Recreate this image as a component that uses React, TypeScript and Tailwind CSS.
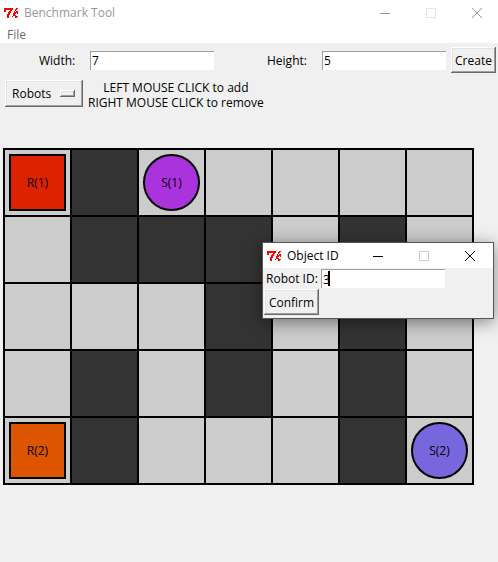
import { useState } from "react";
import type { ReactNode } from "react";

type Piece = { label: string; shape: "robot" | "station"; color: string };

const ROWS = [
  ".#.....",
  ".###.#.",
  "...#.#.",
  ".#.#.#.",
  ".#...#.",
];

const PIECES: Record<string, Piece> = {
  "0-0": { label: "R(1)", shape: "robot", color: "bg-[#dd2200]" },
  "0-2": { label: "S(1)", shape: "station", color: "bg-[#aa33dd]" },
  "4-0": { label: "R(2)", shape: "robot", color: "bg-[#dd5500]" },
  "4-6": { label: "S(2)", shape: "station", color: "bg-[#7766dd]" },
};

const RAISED =
  "bg-[#f0f0f0] shadow-[inset_-1px_-1px_#696969,inset_1px_1px_#ffffff,inset_-2px_-2px_#a0a0a0,inset_2px_2px_#e3e3e3]";

function TkLogo() {
  return (
    <svg
      width="16"
      height="12"
      viewBox="0 0 16 12"
      fill="none"
      stroke="#f00"
      shapeRendering="crispEdges"
      aria-hidden="true"
    >
      <path d="M0.5 4.5 V2 M0 2 H9" strokeWidth="2" />
      <path d="M8 2 L5 6 L3.5 11" strokeWidth="2" />
      <path d="M13.5 1 L11 4 L8.5 10.5" strokeWidth="1.2" />
      <path d="M9.5 7.5 L13.5 4 M10.5 7 L12 10.5 L14.5 8.5 M13.5 4 V6.5" strokeWidth="1.2" />
    </svg>
  );
}

function WindowButtons({ active }: { active: boolean }) {
  const tone = active ? "text-black" : "text-[#999999]";
  const faded = active ? "text-[#cccccc]" : "text-[#e6e6e6]";
  return (
    <div className={`ml-auto flex gap-9 ${tone}`}>
      <button type="button" aria-label="Minimize">
        <svg width="10" height="10" viewBox="0 0 10 10" stroke="currentColor">
          <path d="M0 5.5H10" />
        </svg>
      </button>
      <button type="button" aria-label="Maximize" disabled className={faded}>
        <svg width="10" height="10" viewBox="0 0 10 10" stroke="currentColor" fill="none">
          <rect x="0.5" y="0.5" width="9" height="9" />
        </svg>
      </button>
      <button type="button" aria-label="Close">
        <svg width="10" height="10" viewBox="0 0 10 10" stroke="currentColor">
          <path d="M0 0L10 10M10 0L0 10" />
        </svg>
      </button>
    </div>
  );
}

function Entry({ id, initial }: { id: string; initial: string }) {
  const [value, setValue] = useState(initial);
  return (
    <input
      id={id}
      value={value}
      onChange={(e) => setValue(e.target.value)}
      className="h-[19px] w-31 border-t border-l border-[#a0a0a0] bg-white px-px outline-none"
    />
  );
}

function PushButton({ children, className }: { children: ReactNode; className: string }) {
  return (
    <button type="button" className={`h-[26px] ${className} ${RAISED}`}>
      {children}
    </button>
  );
}

function Board() {
  return (
    <div className="grid w-fit grid-cols-[repeat(7,65px)] gap-0.5 bg-black p-0.5">
      {ROWS.flatMap((row, y) =>
        row.split("").map((cell, x) => {
          const piece = PIECES[`${y}-${x}`];
          return (
            <div
              key={`${y}-${x}`}
              className={`flex h-[65px] items-center justify-center ${cell === "#" ? "bg-[#333333]" : "bg-[#cccccc]"}`}
            >
              {piece && (
                <div
                  className={`flex size-[57px] items-center justify-center border-2 border-black ${piece.color} ${piece.shape === "station" ? "rounded-full" : ""}`}
                >
                  {piece.label}
                </div>
              )}
            </div>
          );
        }),
      )}
    </div>
  );
}

function ObjectIdDialog() {
  return (
    <div
      role="dialog"
      aria-label="Object ID"
      className="absolute top-[242px] left-[262px] h-[77px] w-[232px] border border-[#555555] bg-[#f0f0f0] shadow-[0_3px_16px_rgba(0,0,0,0.45)]"
    >
      <div className="flex h-[25px] items-center bg-white pr-[18px] pl-1">
        <TkLogo />
        <span className="ml-1">Object ID</span>
        <WindowButtons active />
      </div>
      <div className="flex items-center pt-px pl-[3px]">
        <label htmlFor="robot-id" className="w-[55px]">
          Robot ID:
        </label>
        <div className="relative flex">
          <Entry id="robot-id" initial="3" />
          <span className="absolute top-0.5 left-[7px] h-[15px] w-0.5 bg-black" />
        </div>
      </div>
      <div className="flex pt-px pl-px">
        <PushButton className="w-[55px]">Confirm</PushButton>
      </div>
    </div>
  );
}

export default function App() {
  return (
    <div className="relative min-h-screen bg-[#f0f0f0] font-['Open_Sans','Noto_Sans',sans-serif] text-[12px] leading-[15px] text-black">
      <header className="bg-white">
        <div className="flex h-[25px] items-center pr-4 pl-1 text-[#999999]">
          <TkLogo />
          <span className="ml-1">Benchmark Tool</span>
          <WindowButtons active={false} />
        </div>
        <nav className="flex h-[18px] items-center pl-[7px] text-[#6d6d6d]">
          <button type="button">File</button>
        </nav>
      </header>

      <main>
        <form onSubmit={(e) => e.preventDefault()} className="flex items-center pt-1 pr-0.5 pl-[39px]">
          <label htmlFor="width" className="w-[51px]">
            Width:
          </label>
          <Entry id="width" initial="7" />
          <label htmlFor="height" className="ml-auto w-[55px]">
            Height:
          </label>
          <Entry id="height" initial="5" />
          <div className="ml-[5px] flex">
            <PushButton className="w-[45px]">Create</PushButton>
          </div>
        </form>

        <div className="flex min-h-[75px] items-start gap-[5px] pt-[7px] pl-[5px]">
          <div className="relative">
            <select
              aria-label="Object type"
              defaultValue="Robots"
              className={`h-[27px] w-[78px] appearance-none pl-[7px] outline-none ${RAISED}`}
            >
              <option>Robots</option>
              <option>Stations</option>
              <option>Walls</option>
            </select>
            <span className={`pointer-events-none absolute top-2.5 right-2 h-[7px] w-[15px] ${RAISED}`} />
          </div>
          <p className="text-center">
            LEFT MOUSE CLICK to add
            <br />
            RIGHT MOUSE CLICK to remove
          </p>
        </div>

        <div className="pl-[3px]">
          <Board />
        </div>
      </main>

      <ObjectIdDialog />
    </div>
  );
}
